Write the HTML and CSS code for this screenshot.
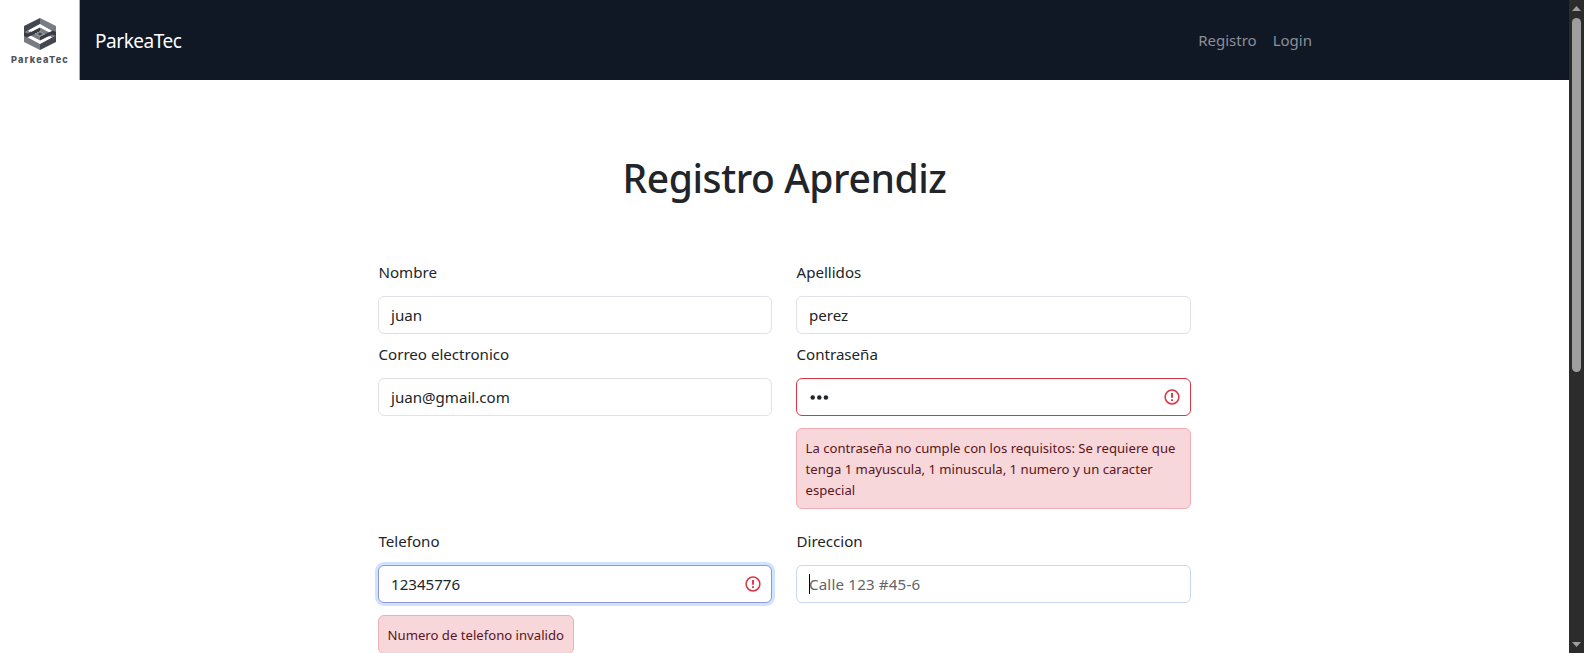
FILE: index.html
```html
<!DOCTYPE html>
<html lang="es">
<head>
<meta charset="utf-8">
<title>ParkeaTec</title>
<link rel="stylesheet" href="styles.css">
</head>
<body>
<div class="page">
  <header class="navbar">
    <div class="logo">
      <svg class="logo-mark" viewBox="0 0 32 32">
        <path fill="#797c84" d="M16 0l16 8v7l-4-2L16 6z"/>
        <path fill="#444751" d="M16 0v6L4 12.500 0 15V8z"/>
        <path fill="#797c84" d="M0 17l4 2.500L16 26v6L0 24z"/>
        <path fill="#444751" d="M32 17l-4 2.500L16 26v6l16-8z"/>
        <path fill="#797c84" d="M16 9.500L32 18l-5 1.500-11-6z"/>
        <path fill="#797c84" d="M16 22.500L0 14l5-1.500 11 6z"/>
        <path fill="#383b46" d="M0 14v4l3 1.500 13-6v-4L4 15.500z"/>
        <path fill="#383b46" d="M32 18v-4l-3-1.500-13 6v4l12-6z"/>
        <path fill="#8a8d94" d="M16 13l5 3-5 3-5-3z"/>
        <path fill="#444751" d="M16 14.500l2.500 1.500-2.500 1.500-2.500-1.500z"/>
        <path fill="none" stroke="#fff" stroke-width="1.800" d="M5 13.300L16 7.500l10.500 5.500M5.500 19L16 24.500l11-5.800"/>
      </svg>
      <span class="logo-name">ParkeaTec</span>
    </div>
    <a class="brand">ParkeaTec</a>
    <nav class="links"><a>Registro</a><a>Login</a></nav>
  </header>
  <main class="content">
    <h1 class="title">Registro Aprendiz</h1>
    <form class="form">
      <div class="field">
        <label class="label">Nombre</label>
        <div class="control"><span>juan</span></div>
      </div>
      <div class="field">
        <label class="label">Apellidos</label>
        <div class="control"><span>perez</span></div>
      </div>
      <div class="field">
        <label class="label">Correo electronico</label>
        <div class="control"><span>juan@gmail.com</span></div>
      </div>
      <div class="field">
        <label class="label">Contraseña</label>
        <div class="control invalid">
          <svg class="dots" viewBox="0 0 20 6"><circle cx="3.700" cy="3.500" r="2.250"/><circle cx="10.300" cy="3.500" r="2.250"/><circle cx="16.900" cy="3.500" r="2.250"/></svg>
          <svg class="warn" viewBox="0 0 16 16"><circle cx="8" cy="8" r="6.900"/><path class="bang" d="M8 4v4.800M8 10.200v1.800"/></svg>
        </div>
        <div class="alert"><span>La contraseña no cumple con los requisitos: Se requiere que</span><span>tenga 1 mayuscula, 1 minuscula, 1 numero y un caracter</span><span>especial</span></div>
      </div>
      <div class="field phone">
        <label class="label">Telefono</label>
        <div class="control focus"><span>12345776</span>
          <svg class="warn" viewBox="0 0 16 16"><circle cx="8" cy="8" r="6.900"/><path class="bang" d="M8 4v4.800M8 10.200v1.800"/></svg>
        </div>
        <div class="alert small"><span>Numero de telefono invalido</span></div>
      </div>
      <div class="field phone">
        <label class="label">Direccion</label>
        <div class="control focusing"><span class="caret"></span><span class="placeholder">Calle 123 #45-6</span></div>
      </div>
    </form>
  </main>
</div>
<div class="scrollbar">
  <svg class="arrow" viewBox="0 0 9 5"><path d="M4.500 0 9 5H0z"/></svg>
  <div class="thumb"></div>
  <svg class="arrow down" viewBox="0 0 9 5"><path d="M0 0h9L4.500 5z"/></svg>
</div>
</body>
</html>
```
FILE: styles.css
```css
* { box-sizing: border-box; }
body {
  margin: 0;
  height: 653px;
  overflow: hidden;
  display: flex;
  background: #fff;
  color: #212529;
  font: 15.1px/24px "Noto Sans", "Open Sans", sans-serif;
}
.page { width: 1569px; height: 653px; overflow: hidden; }
.navbar { display: flex; align-items: center; height: 80px; background: #101725; }
.logo {
  width: 80px; height: 80px; padding-top: 18px;
  display: flex; flex-direction: column; align-items: center;
  background: #fff; border-right: 1px solid #a9acb3;
}
.logo-mark { width: 32px; height: 32px; flex: none; }
.logo-name { margin-top: 4px; font: 800 9.2px/11px Inter, "Open Sans", sans-serif; letter-spacing: 1.2px; margin-right: -1px; color: #50535b; white-space: nowrap; }
.brand { margin: 2px 0 0 15px; font-size: 19px; letter-spacing: -0.45px; line-height: 30px; color: #fff; }
.links { display: flex; gap: 16px; margin-left: auto; margin-right: 257px; font-size: 15px; color: #8c8f96; }
.content { padding-top: 74px; }
.title { margin: 0 0 58px; text-align: center; font-size: 39px; letter-spacing: -0.4px; line-height: 48px; font-weight: 500; }
.form {
  width: 813px; margin-left: 378px;
  display: grid; grid-template-columns: 394px 395px; column-gap: 24px; row-gap: 8px;
}
.field { display: flex; flex-direction: column; align-items: stretch; }
.phone { margin-top: 12px; }
.label { align-self: flex-start; margin: 0 0 12px 0.5px; white-space: nowrap; }
.control {
  height: 38px; padding: 0 12px; display: flex; align-items: center;
  border: 1px solid #dee2e6; border-radius: 6px; background: #fff; white-space: nowrap;
}
.invalid { border-color: #dc3545; }
.focus { border-color: #9098d8; box-shadow: 0 0 0 3px #cfe2ff; }
.focusing { border-color: #c8d8f2; }
.warn { width: 16px; height: 16px; margin-left: auto; margin-right: -2px; fill: none; stroke: #dc3545; stroke-width: 1.5; }
.bang { stroke-width: 1.9; }
.dots { width: 20px; height: 6px; fill: #212529; }
.alert {
  margin-top: 12px; padding: 9px 8px 7px 8.6px; display: flex; flex-direction: column; align-items: flex-start;
  border: 1px solid #f1aeb5; border-radius: 6px; background: #f8d7da; color: #58151c;
  font-size: 13.14px; line-height: 21px; white-space: nowrap;
}
.small { width: 196px; }
.caret { width: 1px; height: 20px; margin-right: -1px; background: #000; }
.placeholder { color: #5f6469; letter-spacing: 0.18px; }
.scrollbar { width: 15px; height: 653px; padding: 6px 3px; background: #2c2c2c; display: flex; flex-direction: column; align-items: flex-start; }
.arrow { width: 9px; height: 5px; fill: #9f9f9f; flex: none; }
.thumb { width: 9px; height: 354px; margin-top: 7px; border-radius: 5px; background: #9f9f9f; }
.down { margin-top: auto; }
```
